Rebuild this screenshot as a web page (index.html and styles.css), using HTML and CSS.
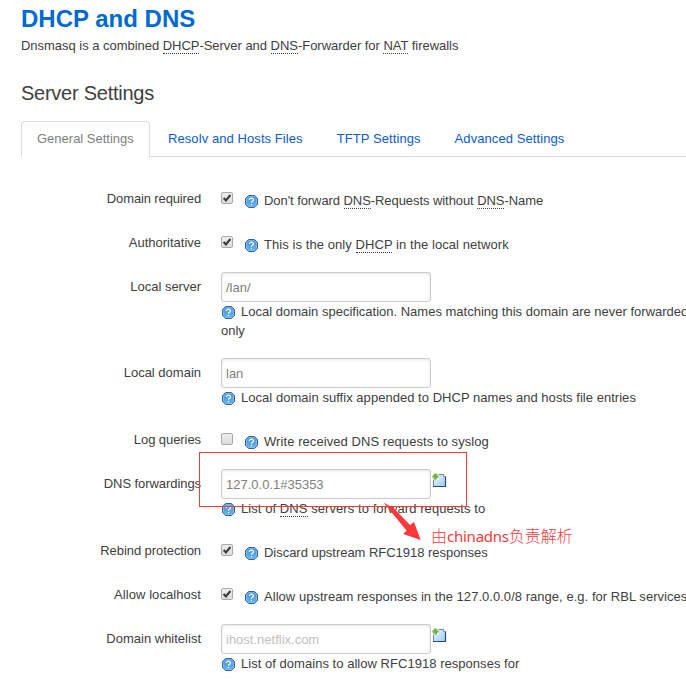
FILE: index.html
```html
<!DOCTYPE html>
<html lang="en">
<head>
<meta charset="utf-8">
<title>DHCP and DNS</title>
<link rel="stylesheet" href="styles.css">
</head>
<body>
<svg class="defs" width="0" height="0" aria-hidden="true">
  <defs>
    <linearGradient id="blue" x1="0" y1="0" x2="0" y2="1"><stop offset="0" stop-color="#4a91da"/><stop offset="1" stop-color="#60b5f3"/></linearGradient>
    <linearGradient id="page" x1="0" y1="0" x2="1" y2="1"><stop offset="0" stop-color="#edf6ff"/><stop offset="1" stop-color="#9acbff"/></linearGradient>
  </defs>
  <symbol id="help" viewBox="0 0 14 14">
    <path d="M4 .5h6L13.500 4v6L10 13.500H4L.5 10V4z" fill="url(#blue)" stroke="#244f80"/>
    <path d="M4.300 1.500h5.400l2.800 2.800v5.400l-2.800 2.800H4.300L1.500 9.700V4.300z" fill="none" stroke="#8bc5f4" stroke-width=".8"/>
    <path d="M4.800 5.300V4.600Q5.100 3.400 7 3.400T9.200 5.200Q9.200 6.200 7.900 6.800Q7 7.200 7 8.400" fill="none" stroke="#fff" stroke-width="1.300"/>
    <path d="M6.300 9.600h1.400v1.400H6.300z" fill="#fff"/>
  </symbol>
  <symbol id="add" viewBox="0 0 15 15">
    <path d="M1.500 1.500h10l2 2v10h-12z" fill="url(#page)" stroke="#6e87ad"/>
    <path d="M1 13.500h12.500V3.500" fill="none" stroke="#29486f" stroke-width="1.200"/>
    <path d="M11.500 1v2.500h2.500" fill="#fff" stroke="#52749f" stroke-width=".7"/>
    <path d="M0 0h7v7H0z" fill="#fff" opacity=".7"/>
    <path d="M3.500 .5v6M.5 3.500h6" stroke="#569b18" stroke-width="2.200"/>
    <path d="M3.500 1.200v4.500M1.200 3.500h4.500" stroke="#83c33c" stroke-width=".7"/>
  </symbol>
  <symbol id="check" viewBox="0 0 13 13">
    <path d="M2.800 6.600l2.500 2.600L10.200 3.200" fill="none" stroke="#3b3b3b" stroke-width="2.300"/>
  </symbol>
</svg>
<main class="content">
  <h2>DHCP and DNS</h2>
  <p class="intro">Dnsmasq is a combined <abbr>DHCP</abbr>-Server and <abbr>DNS</abbr>-Forwarder for <abbr>NAT</abbr> firewalls</p>
  <h3>Server Settings</h3>
  <nav class="tabs">
    <a class="tab active">General Settings</a><a class="tab">Resolv and Hosts Files</a><a class="tab">TFTP Settings</a><a class="tab">Advanced Settings</a>
  </nav>
  <section class="form">
    <div class="row">
      <label class="tight">Domain required</label>
      <div class="field toggle"><span class="box"><svg><use href="#check"/></svg></span><svg class="help"><use href="#help"/></svg><span class="t1">Don't forward <abbr>DNS</abbr>-Requests without <abbr>DNS</abbr>-Name</span></div>
    </div>
    <div class="row">
      <label>Authoritative</label>
      <div class="field toggle"><span class="box"><svg><use href="#check"/></svg></span><svg class="help"><use href="#help"/></svg><span class="t2">This is the only <abbr>DHCP</abbr> in the local network</span></div>
    </div>
    <div class="row tall">
      <label>Local server</label>
      <div class="field"><div class="control"><span class="input">/lan/</span></div><div class="desc"><svg class="help"><use href="#help"/></svg><span>Local domain specification. Names matching this domain are never forwarded</span></div><div class="more">only</div></div>
    </div>
    <div class="row mid">
      <label>Local domain</label>
      <div class="field"><div class="control"><span class="input">lan</span></div><div class="desc"><svg class="help"><use href="#help"/></svg><span class="t4">Local domain suffix appended to DHCP names and hosts file entries</span></div></div>
    </div>
    <div class="row">
      <label class="snug">Log queries</label>
      <div class="field toggle"><span class="box"></span><svg class="help"><use href="#help"/></svg><span class="t2">Write received DNS requests to syslog</span></div>
    </div>
    <div class="row mid">
      <label class="snug">DNS forwardings</label>
      <div class="field"><div class="control"><span class="input">127.0.0.1#35353</span><svg class="add"><use href="#add"/></svg></div><div class="desc"><svg class="help"><use href="#help"/></svg><span class="t2">List of <abbr>DNS</abbr> servers to forward requests to</span></div></div>
    </div>
    <div class="row">
      <label class="snug">Rebind protection</label>
      <div class="field toggle"><span class="box"><svg><use href="#check"/></svg></span><svg class="help"><use href="#help"/></svg><span class="t7">Discard upstream RFC1918 responses</span></div>
    </div>
    <div class="row">
      <label class="loose">Allow localhost</label>
      <div class="field toggle"><span class="box"><svg><use href="#check"/></svg></span><svg class="help"><use href="#help"/></svg><span class="t4">Allow upstream responses in the 127.0.0.0/8 range, e.g. for RBL services</span></div>
    </div>
    <div class="row mid">
      <label>Domain whitelist</label>
      <div class="field"><div class="control"><span class="input placeholder">ihost.netflix.com</span><svg class="add"><use href="#add"/></svg></div><div class="desc"><svg class="help"><use href="#help"/></svg><span class="t4">List of domains to allow RFC1918 responses for</span></div></div>
    </div>
  </section>
</main>
<div class="highlight"></div>
<svg class="arrow" viewBox="0 0 40 38"><path d="M-.5 -.5L10 5.500L26 22L30 19L36.700 37L19.300 31L22.500 27.500Z" fill="#fc3838"/></svg>
<div class="note">由<span>chinadns</span>负责解析</div>
</body>
</html>
```
FILE: styles.css
```css
* { box-sizing: border-box; }
body {
  margin: 0;
  width: 686px;
  height: 692px;
  position: relative;
  overflow: hidden;
  background: #fff;
  color: #404040;
  font: 13px/18px "Liberation Sans", Arial, sans-serif;
}
.defs { position: absolute; }
.content { padding-left: 21px; }
h2 { margin: 0; height: 37px; font-size: 24px; line-height: 37px; color: #0069d6; }
.intro { margin: 0; white-space: nowrap; letter-spacing: -.03px; }
abbr { border-bottom: 1px dotted #404040; }
h3 { margin: 20px 0 10px; font-size: 20px; line-height: 36px; font-weight: normal; letter-spacing: -.25px; }
.tabs { display: flex; height: 36px; border-bottom: 1px solid #ddd; white-space: nowrap; }
.tab { height: 36px; padding: 0 16px; line-height: 33px; color: #0b5bd0; letter-spacing: .08px; border: 1px solid transparent; border-bottom: 0; }
.tab.active { width: 129px; padding: 0 15px; margin-right: 1px; letter-spacing: 0; color: #808080; background: #fff; border-color: #ddd; border-radius: 4px 4px 0 0; }
.form { padding-top: 27px; }
.row { display: grid; grid-template-columns: 180px 1fr; column-gap: 20px; height: 44px; white-space: nowrap; }
.row.mid { height: 67px; }
.row.tall { height: 86px; }
label { text-align: right; padding-top: 6px; }
.tight { letter-spacing: -.13px; }
.snug { letter-spacing: -.07px; }
.loose { letter-spacing: .06px; }
.t1 { letter-spacing: -.07px; }
.t2 { letter-spacing: .07px; }
.t4 { letter-spacing: .035px; }
.t7 { letter-spacing: -.03px; }
.field { min-width: 0; }
.toggle { display: flex; align-items: flex-start; padding-top: 8px; }
.box { width: 12px; height: 12px; flex: none; border: 1px solid #a9a9a9; border-radius: 2px; background: linear-gradient(#eee, #dcdcdc); display: flex; }
.box svg { width: 12px; height: 12px; margin: -1px; }
.help { width: 13px; height: 13px; flex: none; }
.toggle .help { margin: 3px 6px 0 12px; }
.control { display: flex; height: 30px; }
.input { width: 210px; height: 30px; padding: 0 4px; border: 1px solid #ccc; border-radius: 3px; line-height: 29px; color: #808080; box-shadow: inset 0 1px 3px rgba(0, 0, 0, .1); }
.input.placeholder { color: #bfbfbf; }
.add { width: 15px; height: 15px; margin: 4px 0 0 1px; }
.desc { display: flex; height: 19px; padding-top: 1px; }
.desc .help { margin: 3px 6px 0 1px; }
.more { line-height: 19px; }
.highlight { position: absolute; left: 199px; top: 452px; width: 268px; height: 55px; border: 1px solid #fc3838; }
.arrow { position: absolute; left: 384px; top: 503px; width: 40px; height: 38px; overflow: visible; }
.note { position: absolute; left: 431px; top: 524px; font: 300 16px/22px "Noto Sans CJK SC", sans-serif; color: #fc3838; white-space: nowrap; }
.note span { font: 15px/22px "Noto Sans", sans-serif; letter-spacing: -.25px; }
```
